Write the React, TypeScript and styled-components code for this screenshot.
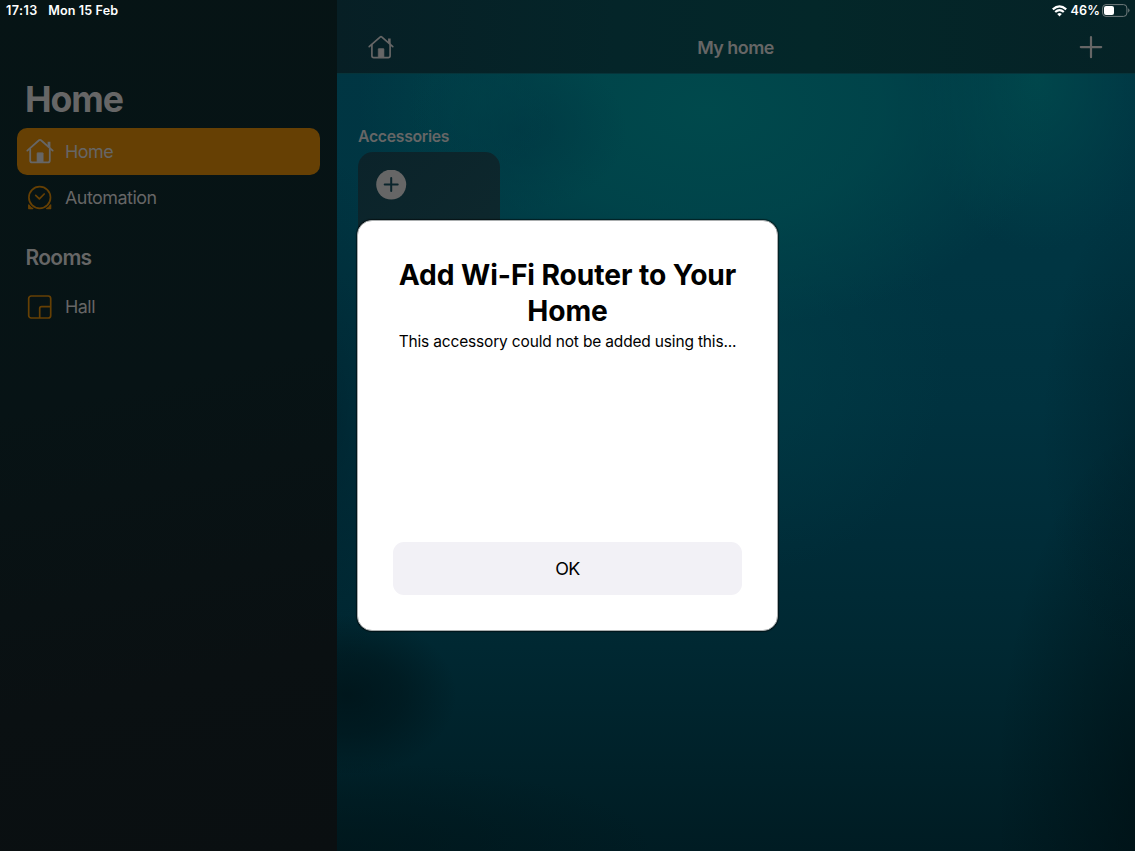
import React from "react";
import styled, { createGlobalStyle } from "styled-components";

const GlobalStyle = createGlobalStyle`
  *, *::before, *::after { box-sizing: border-box; }
  body { margin: 0; background: #071314; }
  button { font: inherit; border: 0; padding: 0; }
`;

const GRAY = "#666666";
const ORANGE = "#664004";

const Screen = styled.div`
  position: relative;
  display: grid;
  grid-template-columns: 337px 1fr;
  width: 1135px;
  height: 851px;
  overflow: hidden;
  color: ${GRAY};
  font-family: Inter, "Liberation Sans", sans-serif;
`;

const Sidebar = styled.aside`
  display: flex;
  flex-direction: column;
  background: linear-gradient(168deg, #061415 0%, #071315 45%, #0a1012 78%, #0a0f11 100%);
`;

const StatusGroup = styled.div<{ $end?: boolean }>`
  display: flex;
  align-items: center;
  justify-content: ${(p) => (p.$end ? "flex-end" : "flex-start")};
  height: 21px;
  padding: ${(p) => (p.$end ? "0 5px 0 0" : "0 0 0 6px")};
  color: #ffffff;
  font-size: 12.6px;
  font-weight: 600;
  line-height: 21px;
  white-space: nowrap;
`;

const StatusText = styled.span<{ $before?: number; $after?: number; $spacing?: number }>`
  margin: 0 ${(p) => p.$after ?? 0}px 0 ${(p) => p.$before ?? 0}px;
  letter-spacing: ${(p) => p.$spacing ?? 0.1}px;
`;

const LargeTitle = styled.h1`
  margin: 56px 0 7px 25px;
  font-size: 35.7px;
  line-height: 44px;
  font-weight: 700;
  letter-spacing: -1.1px;
`;

const NavItem = styled.a<{ $active?: boolean }>`
  display: flex;
  align-items: center;
  gap: 11px;
  height: 46.5px;
  margin: 0 17px;
  padding-left: 9px;
  border-radius: 10px;
  background: ${(p) => (p.$active ? ORANGE : "transparent")};
  font-size: 17.9px;
  letter-spacing: -0.5px;

  svg { flex: none; }
`;

const SectionTitle = styled.h2`
  margin: 22px 0 10px 25.5px;
  font-size: 21px;
  line-height: 30px;
  font-weight: 600;
  letter-spacing: -0.7px;
`;

const Main = styled.main`
  display: flex;
  flex-direction: column;
  background:
    radial-gradient(ellipse 110px 80px at 10px 695px, rgba(0, 16, 20, 0.7), rgba(0, 16, 20, 0.45) 50%, transparent),
    radial-gradient(ellipse 60px 260px at 0px 420px, rgba(0, 24, 34, 0.4), transparent),
    radial-gradient(ellipse 75px 70px at 145px 100px, rgba(0, 64, 72, 0.6), transparent),
    radial-gradient(ellipse 110px 80px at 180px 130px, rgba(0, 50, 64, 0.55), transparent),
    radial-gradient(ellipse 350px 220px at 370px 110px, #00494c, rgba(0, 72, 76, 0.75) 50%, transparent),
    radial-gradient(ellipse 120px 170px at 700px 80px, rgba(0, 72, 76, 0.9), rgba(0, 70, 76, 0.5) 50%, transparent),
    radial-gradient(ellipse 110px 240px at 815px 430px, rgba(0, 22, 30, 0.4), transparent),
    radial-gradient(ellipse 170px 380px at 830px 800px, rgba(0, 14, 17, 0.75), transparent),
    radial-gradient(ellipse 320px 90px at 0px 851px, rgba(0, 20, 24, 0.6), transparent),
    radial-gradient(ellipse 180px 220px at 430px 350px, rgba(0, 62, 72, 0.6), transparent),
    linear-gradient(180deg, #003643 0%, #003542 32%, #00323f 48%, #002c38 64%, #002832 76%, #002129 90%, #001c23 100%);
`;

const TopBar = styled.header`
  flex: none;
  height: 74px;
  border-bottom: 1px solid #06343a;
  background: linear-gradient(90deg, #071f25 0%, #042529 35%, #032729 60%, #052226 100%);
`;

const Toolbar = styled.div`
  display: grid;
  grid-template-columns: 1fr auto 1fr;
  align-items: center;
  height: 52px;
  padding: 0 32px 0 31px;

  svg { display: block; }
  svg:last-child { justify-self: end; }
  svg:first-child { justify-self: start; }
`;

const ToolbarTitle = styled.div`
  font-size: 17.9px;
  font-weight: 600;
  letter-spacing: -0.5px;
`;

const Accessories = styled.section`
  padding: 53px 21px;
`;

const AccessoriesTitle = styled.h3`
  margin: 0 0 5px;
  font-size: 15.8px;
  line-height: 20px;
  font-weight: 600;
  letter-spacing: -0.3px;
`;

const Tile = styled.div`
  width: 142px;
  height: 142px;
  padding: 18px;
  border-radius: 15px;
  background: linear-gradient(135deg, #0b232a, #0e292e);
`;

const Modal = styled.div`
  position: absolute;
  top: 220px;
  left: 357px;
  display: flex;
  flex-direction: column;
  width: 421px;
  height: 411px;
  padding: 36px 35px 35.5px;
  border: 1px solid #a9adae;
  border-radius: 15px;
  background: #ffffff;
  color: #000000;
  text-align: center;
  box-shadow: 0 0 1px 1px rgba(0, 0, 0, 0.5);
`;

const ModalTitle = styled.h2`
  margin: 0 -10px;
  font-size: 28.2px;
  line-height: 36px;
  font-weight: 700;
  letter-spacing: -0.08px;
`;

const ModalText = styled.p`
  margin: 3px -10px 0;
  font-size: 15.5px;
  line-height: 20px;
  letter-spacing: -0.17px;
  white-space: nowrap;
`;

const OkButton = styled.button`
  height: 52.5px;
  margin-top: auto;
  border-radius: 11px;
  background: #f2f1f6;
  color: #000000;
  font-size: 17.9px;
  letter-spacing: -0.5px;
`;

const HouseIcon = ({ size }: { size: number }) => (
  <svg width={size} height={size} viewBox="0 0 28 28" fill="none" stroke={GRAY} strokeWidth="1.8" strokeLinecap="round" strokeLinejoin="round">
    <path d="M1.3 13.6 13 3.3Q14 2.5 15 3.3L26.7 13.6" />
    <path d="M4.2 11.8V23.4Q4.2 25.4 6.2 25.4H21.8Q23.8 25.4 23.8 23.4V11.8" />
    <path d="M21.6 4.8H24.4V11.4L21.6 9Z" fill={GRAY} stroke="none" />
    <path d="M11 25V16.3Q11 15.7 11.6 15.7H16.6Q17.2 15.7 17.2 16.3V25Z" fill={GRAY} strokeWidth="0.6" />
  </svg>
);

const ClockIcon = () => (
  <svg width="28" height="28" viewBox="0 0 28 28" fill="none" stroke={ORANGE} strokeWidth="1.7" strokeLinecap="round" strokeLinejoin="round">
    <circle cx="13.7" cy="13.5" r="10.8" />
    <path d="M9.7 11.3 13.4 14.9 18.2 10" />
    <path d="M2.7 20.8Q4.3 23.4 6.8 24.6H2.7ZM24.7 20.8Q23.1 23.4 20.6 24.6H24.7Z" fill={ORANGE} strokeWidth="1.2" />
  </svg>
);

const RoomIcon = () => (
  <svg width="28" height="28" viewBox="0 0 28 28" fill="none" stroke={ORANGE} strokeWidth="1.7">
    <rect x="2.7" y="4" width="22" height="22" rx="2.5" />
    <path d="M13.7 26V16.5Q13.7 14.7 15.5 14.7H24.7" />
  </svg>
);

const PlusIcon = () => (
  <svg width="24" height="24" viewBox="0 0 24 24" stroke={GRAY} strokeWidth="2.2" strokeLinecap="round">
    <path d="M12 2V22.2M1.8 12.1H22.2" />
  </svg>
);

const AddCircleIcon = () => (
  <svg width="31" height="31" viewBox="0 0 31 31">
    <circle cx="15.2" cy="14.6" r="15" fill={GRAY} />
    <path d="M15.2 8.1V21.1M8.7 14.6H21.7" stroke="#0b252c" strokeWidth="2" strokeLinecap="round" />
  </svg>
);

const WifiIcon = () => (
  <svg width="15" height="12" viewBox="0 0 15 12" fill="none" stroke="#ffffff" strokeWidth="2.2">
    <path d="M.8 4.4Q7.5-1.7 14.2 4.4" />
    <path d="M3.2 7Q7.5 3.1 11.8 7" />
    <path d="M7.5 11.4 5.2 9Q7.5 7.1 9.8 9Z" fill="#ffffff" stroke="none" />
  </svg>
);

const BatteryIcon = () => (
  <svg width="28" height="13" viewBox="0 0 28 13">
    <rect x=".6" y=".6" width="24.3" height="11.8" rx="3.4" fill="none" stroke="#727c7d" />
    <rect x="2" y="2" width="10" height="9" rx="2" fill="#ffffff" />
    <path d="M26.2 4.3Q28.8 6.5 26.2 8.7Z" fill="#727c7d" />
  </svg>
);

export default function App() {
  return (
    <Screen>
      <GlobalStyle />
      <Sidebar>
        <StatusGroup>
          <StatusText $after={10.5} $spacing={0.45}>17:13</StatusText>
          <StatusText>Mon 15 Feb</StatusText>
        </StatusGroup>
        <LargeTitle>Home</LargeTitle>
        <NavItem $active>
          <HouseIcon size={28} />
          Home
        </NavItem>
        <NavItem>
          <ClockIcon />
          Automation
        </NavItem>
        <SectionTitle>Rooms</SectionTitle>
        <NavItem>
          <RoomIcon />
          Hall
        </NavItem>
      </Sidebar>
      <Main>
        <TopBar>
          <StatusGroup $end>
            <WifiIcon />
            <StatusText $before={4} $after={2}>46%</StatusText>
            <BatteryIcon />
          </StatusGroup>
          <Toolbar>
            <HouseIcon size={26} />
            <ToolbarTitle>My home</ToolbarTitle>
            <PlusIcon />
          </Toolbar>
        </TopBar>
        <Accessories>
          <AccessoriesTitle>Accessories</AccessoriesTitle>
          <Tile>
            <AddCircleIcon />
          </Tile>
        </Accessories>
      </Main>
      <Modal role="dialog">
        <ModalTitle>
          Add Wi-Fi Router to Your
          <br />
          Home
        </ModalTitle>
        <ModalText>This accessory could not be added using this...</ModalText>
        <OkButton>OK</OkButton>
      </Modal>
    </Screen>
  );
}
